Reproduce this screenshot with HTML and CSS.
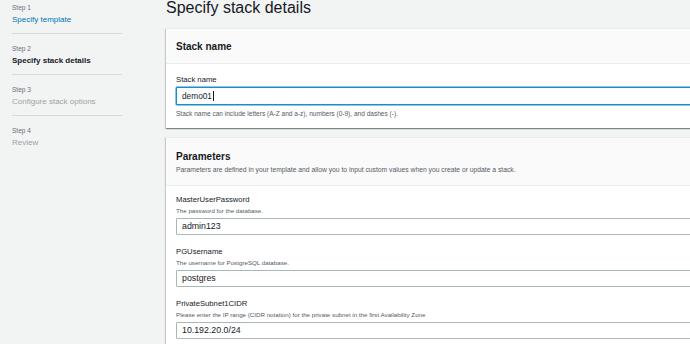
FILE: index.html
```html
<!DOCTYPE html>
<html lang="en">
<head>
<meta charset="utf-8">
<title>Specify stack details</title>
<link rel="stylesheet" href="styles.css">
</head>
<body>
<div class="viewport">
<div class="page">
  <nav class="steps">
    <div class="step">
      <div class="step-num">Step 1</div>
      <a class="step-title step-link" href="#">Specify template</a>
    </div>
    <div class="step">
      <div class="step-num">Step 2</div>
      <div class="step-title step-current">Specify stack details</div>
    </div>
    <div class="step">
      <div class="step-num">Step 3</div>
      <div class="step-title step-disabled">Configure stack options</div>
    </div>
    <div class="step">
      <div class="step-num">Step 4</div>
      <div class="step-title step-disabled">Review</div>
    </div>
  </nav>
  <main class="main">
    <h1 class="page-title">Specify stack details</h1>
    <section class="card">
      <header class="card-header card-header-simple">
        <h2 class="card-title">Stack name</h2>
      </header>
      <div class="card-body card-body-stack">
        <label class="field-label">Stack name</label>
        <div class="input input-focus">demo01<span class="caret"></span></div>
        <div class="hint">Stack name can include letters (A-Z and a-z), numbers (0-9), and dashes (-).</div>
      </div>
    </section>
    <section class="card">
      <header class="card-header card-header-desc">
        <h2 class="card-title">Parameters</h2>
        <div class="card-desc">Parameters are defined in your template and allow you to input custom values when you create or update a stack.</div>
      </header>
      <div class="card-body card-body-params">
        <div class="field">
          <label class="field-label">MasterUserPassword</label>
          <div class="field-desc">The password for the database.</div>
          <div class="input">admin123</div>
        </div>
        <div class="field">
          <label class="field-label">PGUsername</label>
          <div class="field-desc">The username for PostgreSQL database.</div>
          <div class="input">postgres</div>
        </div>
        <div class="field">
          <label class="field-label">PrivateSubnet1CIDR</label>
          <div class="field-desc">Please enter the IP range (CIDR notation) for the private subnet in the first Availability Zone</div>
          <div class="input">10.192.20.0/24</div>
        </div>
      </div>
    </section>
  </main>
</div>
</div>
</body>
</html>
```
FILE: styles.css
```css
html, body {
  margin: 0;
  padding: 0;
  overflow: hidden;
  background: #f2f3f3;
  font-family: "Liberation Sans", Arial, sans-serif;
  color: #16191f;
}

.viewport {
  width: 690px;
  height: 344px;
  overflow: hidden;
}

.page {
  display: grid;
  grid-template-columns: 166px 560px;
  width: 726px;
}

/* Sidebar steps */
.steps {
  padding-left: 12px;
  width: 110px;
}

.step {
  display: flex;
  flex-direction: column;
  padding: 9.5px 0 6.5px;
  border-bottom: 1px solid #d5dbdb;
}

.step:first-child {
  padding-top: 2.5px;
}

.step:last-child {
  border-bottom: none;
}

.step-num {
  font-size: 6.5px;
  line-height: 9px;
  color: #687078;
}

.step-title {
  font-size: 8px;
  line-height: 15px;
  text-decoration: none;
}

.step-link {
  color: #0073bb;
}

.step-current {
  color: #16191f;
  font-weight: bold;
}

.step-disabled {
  color: #9aa5a6;
}

/* Main */
.main {
  display: flex;
  flex-direction: column;
}

.page-title {
  margin: -2.5px 0 10.5px;
  font-size: 16px;
  line-height: 20px;
  font-weight: normal;
  color: #16191f;
}

.card {
  background: #fff;
  border-top: 1px solid #eaeded;
  box-shadow: 0 1px 1px 0 rgba(0, 28, 36, 0.3), 1px 1px 1px 0 rgba(0, 28, 36, 0.15), -1px 1px 1px 0 rgba(0, 28, 36, 0.15);
  margin-bottom: 9px;
}

.card-header {
  background: #fafafa;
  border-bottom: 1px solid #eaeded;
  padding: 0 10px;
}

.card-header-simple {
  height: 34px;
  display: flex;
  align-items: center;
}

.card-header-desc {
  padding-top: 11.5px;
  padding-bottom: 11px;
}

.card-title {
  margin: 0;
  font-size: 10px;
  line-height: 13px;
  font-weight: bold;
}

.card-desc {
  margin-top: 2px;
  font-size: 6.75px;
  line-height: 9px;
  color: #545b64;
}

.card-body {
  padding: 0 0 0 10px;
  display: flex;
  flex-direction: column;
}

.card-body-stack {
  padding-top: 9.5px;
  padding-bottom: 10.5px;
}

.card-body-params {
  padding-top: 8.5px;
}

.field {
  display: flex;
  flex-direction: column;
  margin-bottom: 11.5px;
}

.field-label {
  font-size: 7.7px;
  line-height: 11px;
  color: #16191f;
}

.card-body-stack .field-label {
  margin-bottom: 2.5px;
}

.field-desc {
  margin-top: 1px;
  margin-bottom: 2.5px;
  font-size: 6.2px;
  line-height: 9px;
  color: #545b64;
}

.input {
  box-sizing: border-box;
  height: 17px;
  border: 1px solid #aab7b8;
  border-radius: 1px;
  background: #fff;
  padding-left: 5px;
  font-size: 8.8px;
  line-height: 15px;
  color: #16191f;
  display: flex;
  align-items: center;
}

.input-focus {
  height: 18px;
  border-color: #1a8fc4;
  box-shadow: 0 0 0 0.5px #1a8fc4;
  font-size: 8.3px;
}

.caret {
  display: inline-block;
  width: 1px;
  height: 10px;
  background: #16191f;
  margin-left: 1px;
}

.hint {
  margin-top: 3.5px;
  font-size: 6.55px;
  line-height: 9px;
  color: #545b64;
}
```
